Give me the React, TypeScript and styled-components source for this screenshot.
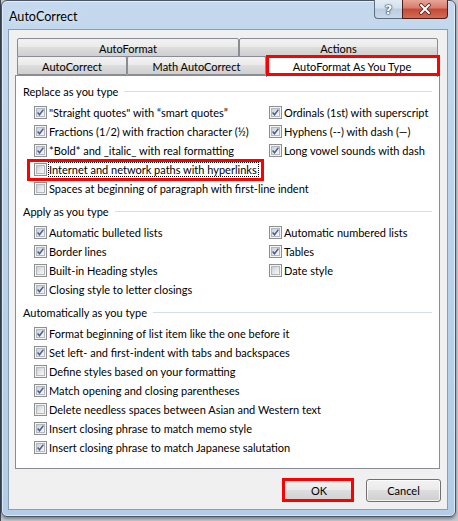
import React from "react";
import styled, { createGlobalStyle } from "styled-components";

const GlobalStyle = createGlobalStyle`
  html, body {
    margin: 0;
    padding: 0;
  }
  body {
    background: #9aa1aa;
    font-family: "Lato", "Liberation Sans", sans-serif;
  }
`;

const UI_FONT = `"Lato", "Liberation Sans", sans-serif`;

// desktop behind the dialog
const Page = styled.div`
  width: 458px;
  height: 521px;
  overflow: hidden;
  background: linear-gradient(90deg, #3c4656 0px, #3c4656 1px, #c4c7cb 1px);
`;

// aero frame
const Window = styled.div`
  box-sizing: border-box;
  margin-left: 1px;
  width: 455px;
  height: 517px;
  border: 1px solid #4b5564;
  border-radius: 6px;
  background: linear-gradient(180deg, #c4d9ee 0%, #bcd4ec 30%, #b3cde8 100%);
  box-shadow: inset 0 0 0 1px rgba(255, 255, 255, 0.55), 0 2px 3px rgba(0, 0, 0, 0.35);
  padding: 0 7px 6px 6px;
  display: flex;
  flex-direction: column;
`;

const TitleBar = styled.div`
  height: 28px;
  display: flex;
  align-items: flex-start;
`;

const Title = styled.div`
  font-family: ${UI_FONT};
  font-size: 12.6px;
  color: #000;
  padding: 8px 0 0 1px;
  line-height: 16px;
  text-shadow: 0 0 6px rgba(255, 255, 255, 0.9);
`;

const CaptionButtons = styled.div`
  margin-left: auto;
  margin-top: -1px;
  display: flex;
`;

const HelpButton = styled.div`
  box-sizing: border-box;
  width: 28px;
  height: 19px;
  border: 1px solid #5f6f82;
  border-right: none;
  border-top: none;
  border-radius: 0 0 0 4px;
  background: linear-gradient(180deg, #e4ecf5 0%, #d3e0ee 45%, #bccde0 50%, #c9d9ea 100%);
  display: flex;
  align-items: center;
  justify-content: center;
  font-family: "DejaVu Sans", sans-serif;
  font-weight: bold;
  font-size: 13px;
  color: #fff;
  text-shadow: 0 0 1px #30394a, 0 0 1px #30394a, 0 0 2px #30394a;
`;

const CloseButton = styled.div`
  box-sizing: border-box;
  width: 46px;
  height: 19px;
  border: 1px solid #4a1f1a;
  border-top: none;
  border-radius: 0 0 4px 0;
  background: linear-gradient(180deg, #e7a597 0%, #d97a6a 45%, #c24a36 50%, #d46b55 100%);
  display: flex;
  align-items: center;
  justify-content: center;
`;

const Client = styled.div`
  flex: 1;
  box-sizing: border-box;
  background: #f0f0f0;
  border: 1px solid #8b9db1;
  display: flex;
  flex-direction: column;
  font-family: ${UI_FONT};
  font-size: 11px;
  font-weight: 400;
  color: #000;
`;

const Tabs = styled.div`
  margin: 8px 7px 0 6px;
  display: flex;
  flex-direction: column;
`;

const TabRow = styled.div`
  display: flex;
  padding: 0 2px;
  height: ${(p: { $h: number }) => p.$h}px;
  align-items: flex-end;
  position: relative;
  z-index: 1;
`;

const Tab = styled.div<{ $w: number; $active?: boolean; $marked?: boolean }>`
  box-sizing: border-box;
  width: ${(p) => p.$w}px;
  height: ${(p) => (p.$active ? 22 : 19)}px;
  margin-bottom: ${(p) => (p.$active ? -2 : 0)}px;
  border: 1px solid #898c95;
  border-bottom: ${(p) => (p.$active ? "none" : "1px solid #898c95")};
  border-radius: 2px 2px 0 0;
  background: ${(p) =>
    p.$active
      ? "#fff"
      : "linear-gradient(180deg, #f2f2f2 0%, #ebebeb 45%, #dddddd 50%, #cfcfcf 100%)"};
  display: flex;
  align-items: center;
  justify-content: center;
  line-height: 15px;
  position: relative;
  padding-top: ${(p) => (p.$active ? 0 : 1)}px;

  &::after {
    content: "";
    display: ${(p) => (p.$marked ? "block" : "none")};
    position: absolute;
    left: -1px;
    right: -3px;
    top: -1px;
    bottom: 1px;
    border: 3px solid #ff0000;
  }
`;

const Panel = styled.div`
  box-sizing: border-box;
  height: 394px;
  border: 1px solid #898c95;
  background: #fff;
  padding: 7px 7px 0 7px;
`;

const Group = styled.div`
  margin-top: ${(p: { $first?: boolean }) => (p.$first ? 0 : 5)}px;
`;

const GroupHeader = styled.div`
  display: flex;
  align-items: center;
  height: 16px;
  gap: 6px;

  &::after {
    content: "";
    flex: 1;
    height: 1px;
    background: #d5dfe5;
  }
`;

const Columns = styled.div`
  margin: 4px 0 0 11px;
  display: flex;
`;

const Column = styled.div`
  display: flex;
  flex-direction: column;
  width: ${(p: { $w?: number }) => (p.$w ? `${p.$w}px` : "auto")};
`;

const Row = styled.div<{ $marked?: boolean }>`
  height: 19px;
  display: flex;
  align-items: center;
  white-space: nowrap;
  position: relative;

  &::after {
    content: "";
    display: ${(p) => (p.$marked ? "block" : "none")};
    position: absolute;
    left: -7px;
    right: 5px;
    top: -1px;
    bottom: -2px;
    border: 3px solid #ff0000;
  }
`;

const Box = styled.span`
  box-sizing: border-box;
  flex: none;
  width: 13px;
  height: 13px;
  border: 1px solid #8e8f8f;
  background: #f4f4f4;
  padding: 1px;
  position: relative;

  &::before {
    content: "";
    display: block;
    box-sizing: border-box;
    width: 100%;
    height: 100%;
    border: 1px solid #b3b8be;
    background: linear-gradient(135deg, #c9cdd3 0%, #e6e8eb 55%, #f8f8f8 100%);
  }

  svg {
    position: absolute;
    left: -1px;
    top: -1px;
  }
`;

const Caption = styled.span<{ $focus?: boolean }>`
  margin-left: 1px;
  border: 1px dotted ${(p) => (p.$focus ? "#000" : "transparent")};
  padding: 0 1px 0 0;
  line-height: 13px;
`;

const Footer = styled.div`
  display: flex;
  justify-content: flex-end;
  gap: 12px;
  margin-top: 10px;
  padding-right: 6px;
`;

const Button = styled.div<{ $w: number; $marked?: boolean }>`
  box-sizing: border-box;
  width: ${(p) => p.$w}px;
  height: 23px;
  border: 1px solid #707070;
  border-radius: 3px;
  background: linear-gradient(180deg, #f2f2f2 0%, #ebebeb 45%, #dddddd 50%, #cfcfcf 100%);
  box-shadow: inset 0 0 0 1px rgba(255, 255, 255, 0.75);
  display: flex;
  align-items: center;
  justify-content: center;
  position: relative;

  &::after {
    content: "";
    display: ${(p) => (p.$marked ? "block" : "none")};
    position: absolute;
    left: -3px;
    right: -1px;
    top: -2px;
    bottom: -1px;
    border: 3px solid #ff0000;
  }
`;

const Check = () => (
  <svg width="13" height="13" viewBox="0 0 13 13">
    <path d="M3.6 6.6 L5.5 8.8 L9.4 3.6" fill="none" stroke="#4a5e92" strokeWidth="1.5" />
  </svg>
);

const CloseGlyph = () => (
  <svg width="14" height="12" viewBox="0 0 14 12">
    <path d="M3 2 L11 10 M11 2 L3 10" stroke="#4a2420" strokeWidth="3.6" strokeLinecap="round" />
    <path d="M3 2 L11 10 M11 2 L3 10" stroke="#fff" strokeWidth="2" strokeLinecap="round" />
  </svg>
);

type Item = { label: string; on: boolean; marked?: boolean; focus?: boolean };

const CheckItem = ({ label, on, marked, focus }: Item) => (
  <Row $marked={marked}>
    <Box>{on && <Check />}</Box>
    <Caption $focus={focus}>{label}</Caption>
  </Row>
);

const replaceLeft: Item[] = [
  { label: "\"Straight quotes\" with \u201csmart quotes\u201d", on: true },
  { label: "Fractions (1/2) with fraction character (\u00bd)", on: true },
  { label: "*Bold* and _italic_ with real formatting", on: true },
  { label: "Internet and network paths with hyperlinks", on: false, marked: true, focus: true },
  { label: "Spaces at beginning of paragraph with first-line indent", on: false },
];

const replaceRight: Item[] = [
  { label: "Ordinals (1st) with superscript", on: true },
  { label: "Hyphens (--) with dash (\u2014)", on: true },
  { label: "Long vowel sounds with dash", on: true },
];

const applyLeft: Item[] = [
  { label: "Automatic bulleted lists", on: true },
  { label: "Border lines", on: true },
  { label: "Built-in Heading styles", on: false },
  { label: "Closing style to letter closings", on: true },
];

const applyRight: Item[] = [
  { label: "Automatic numbered lists", on: true },
  { label: "Tables", on: true },
  { label: "Date style", on: false },
];

const autoItems: Item[] = [
  { label: "Format beginning of list item like the one before it", on: true },
  { label: "Set left- and first-indent with tabs and backspaces", on: true },
  { label: "Define styles based on your formatting", on: false },
  { label: "Match opening and closing parentheses", on: true },
  { label: "Delete needless spaces between Asian and Western text", on: false },
  { label: "Insert closing phrase to match memo style", on: true },
  { label: "Insert closing phrase to match Japanese salutation", on: true },
];

export default function App() {
  return (
    <Page>
      <GlobalStyle />
      <Window>
        <TitleBar>
          <Title>AutoCorrect</Title>
          <CaptionButtons>
            <HelpButton>?</HelpButton>
            <CloseButton>
              <CloseGlyph />
            </CloseButton>
          </CaptionButtons>
        </TitleBar>
        <Client>
          <Tabs>
            <TabRow $h={19}>
              <Tab $w={222}>AutoFormat</Tab>
              <Tab $w={199}>Actions</Tab>
            </TabRow>
            <TabRow $h={18}>
              <Tab $w={110}>AutoCorrect</Tab>
              <Tab $w={139}>Math AutoCorrect</Tab>
              <Tab $w={172} $active $marked>
                AutoFormat As You Type
              </Tab>
            </TabRow>
            <Panel>
              <Group $first>
                <GroupHeader>Replace as you type</GroupHeader>
                <Columns>
                  <Column $w={235}>
                    {replaceLeft.map((it) => (
                      <CheckItem key={it.label} {...it} />
                    ))}
                  </Column>
                  <Column>
                    {replaceRight.map((it) => (
                      <CheckItem key={it.label} {...it} />
                    ))}
                  </Column>
                </Columns>
              </Group>
              <Group>
                <GroupHeader>Apply as you type</GroupHeader>
                <Columns>
                  <Column $w={235}>
                    {applyLeft.map((it) => (
                      <CheckItem key={it.label} {...it} />
                    ))}
                  </Column>
                  <Column>
                    {applyRight.map((it) => (
                      <CheckItem key={it.label} {...it} />
                    ))}
                  </Column>
                </Columns>
              </Group>
              <Group>
                <GroupHeader>Automatically as you type</GroupHeader>
                <Columns>
                  <Column>
                    {autoItems.map((it) => (
                      <CheckItem key={it.label} {...it} />
                    ))}
                  </Column>
                </Columns>
              </Group>
            </Panel>
          </Tabs>
          <Footer>
            <Button $w={70} $marked>
              OK
            </Button>
            <Button $w={75}>Cancel</Button>
          </Footer>
        </Client>
      </Window>
    </Page>
  );
}
